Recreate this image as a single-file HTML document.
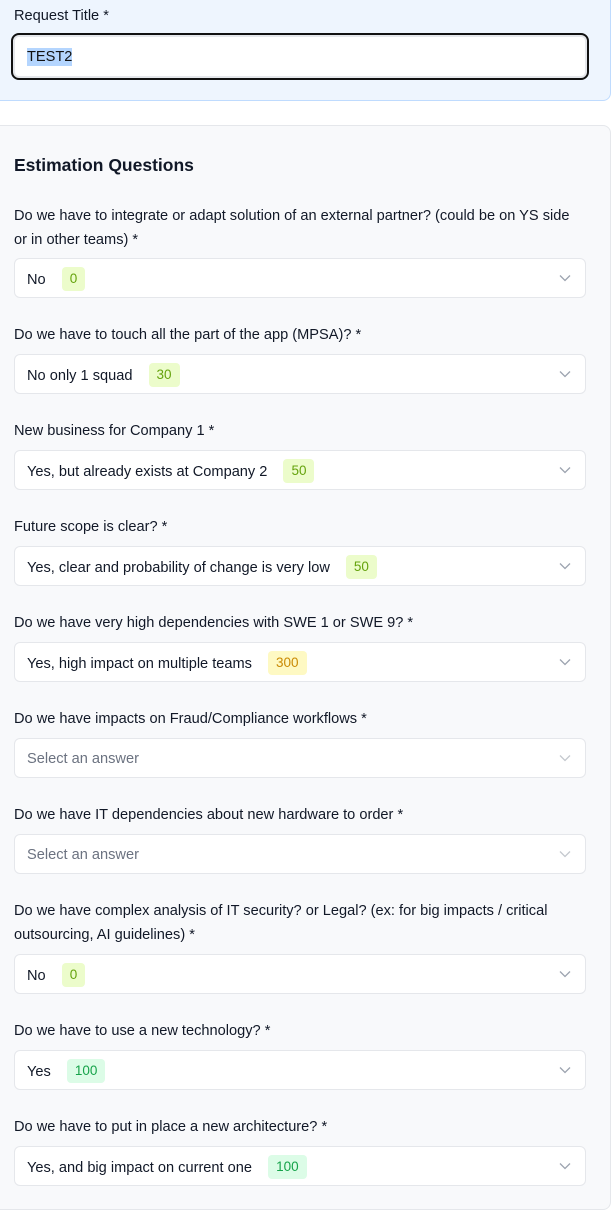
<!DOCTYPE html>
<html><head><meta charset="utf-8"><style>
*{box-sizing:border-box;margin:0;padding:0}
body{width:612px;height:1212px;background:#fff;font-family:"Liberation Sans",Arial,sans-serif;color:#111827;position:relative;overflow:hidden}
.top{position:absolute;left:-10px;top:-10px;width:621px;height:111px;background:#eef5fe;border:1px solid #bfdbfe;border-radius:8px}
.lbl{position:absolute;left:14px;font-size:14.6px;line-height:24px;color:#111827;white-space:nowrap;margin-top:1px}
.inp{position:absolute;left:11px;top:33px;width:578px;height:47px;border:2px solid #111;border-radius:8px;background:#fff;box-shadow:inset 0 0 0 2px #e5e7eb}
.inp span{position:absolute;left:14px;top:13px;font-size:14.6px;line-height:18px;background:#b4d5fe;color:#111}
.panel{position:absolute;left:-10px;top:125px;width:621px;height:1085px;background:#f8f9fb;border:1px solid #e5e7eb;border-radius:8px}
h2{position:absolute;left:14px;top:153px;font-size:17.5px;font-weight:bold;line-height:24px;color:#111827}
.sel{position:absolute;left:14px;width:572px;height:40px;background:#fff;border:1px solid #e5e7eb;border-radius:6px;font-size:14.6px}
.sel .t{position:absolute;left:12px;top:9px;line-height:18px;white-space:nowrap}
.sel .t.ph{color:#6b7280;top:11px}
.b{display:inline-block;margin-left:12px;padding:0 8px;height:24px;line-height:24px;border-radius:4px;font-size:13.5px;vertical-align:middle;position:relative;top:-1px}
.g{background:#ecfccb;color:#65a30d}.y{background:#fef9c3;color:#ca8a04}.gg{background:#dcfce7;color:#16a34a}
.sel svg{position:absolute;right:14px;top:15px}
</style></head><body>
<div class="top"></div>
<div class="lbl" style="top:3px">Request Title *</div>
<div class="inp"><span>TEST2</span></div>
<div class="panel"></div>
<h2>Estimation Questions</h2>

<div class="lbl" style="top:203px">Do we have to integrate or adapt solution of an external partner? (could be on YS side<br>or in other teams) *</div>
<div class="sel" style="top:258px"><div class="t">No <span class="b g">0</span></div><svg width="12" height="8"><path d="M1 1.5l5 5 5-5" stroke="#9ca3af" stroke-width="1.3" fill="none"/></svg></div>

<div class="lbl" style="top:322px">Do we have to touch all the part of the app (MPSA)? *</div>
<div class="sel" style="top:354px"><div class="t">No only 1 squad <span class="b g">30</span></div><svg width="12" height="8"><path d="M1 1.5l5 5 5-5" stroke="#9ca3af" stroke-width="1.3" fill="none"/></svg></div>

<div class="lbl" style="top:418px">New business for Company 1 *</div>
<div class="sel" style="top:450px"><div class="t">Yes, but already exists at Company 2 <span class="b g">50</span></div><svg width="12" height="8"><path d="M1 1.5l5 5 5-5" stroke="#9ca3af" stroke-width="1.3" fill="none"/></svg></div>

<div class="lbl" style="top:514px">Future scope is clear? *</div>
<div class="sel" style="top:546px"><div class="t">Yes, clear and probability of change is very low <span class="b g">50</span></div><svg width="12" height="8"><path d="M1 1.5l5 5 5-5" stroke="#9ca3af" stroke-width="1.3" fill="none"/></svg></div>

<div class="lbl" style="top:610px">Do we have very high dependencies with SWE 1 or SWE 9? *</div>
<div class="sel" style="top:642px"><div class="t">Yes, high impact on multiple teams <span class="b y">300</span></div><svg width="12" height="8"><path d="M1 1.5l5 5 5-5" stroke="#9ca3af" stroke-width="1.3" fill="none"/></svg></div>

<div class="lbl" style="top:706px">Do we have impacts on Fraud/Compliance workflows *</div>
<div class="sel" style="top:738px"><div class="t ph">Select an answer</div><svg width="12" height="8"><path d="M1 1.5l5 5 5-5" stroke="#c4c8ce" stroke-width="1.3" fill="none"/></svg></div>

<div class="lbl" style="top:802px">Do we have IT dependencies about new hardware to order *</div>
<div class="sel" style="top:834px"><div class="t ph">Select an answer</div><svg width="12" height="8"><path d="M1 1.5l5 5 5-5" stroke="#c4c8ce" stroke-width="1.3" fill="none"/></svg></div>

<div class="lbl" style="top:898px">Do we have complex analysis of IT security? or Legal? (ex: for big impacts / critical<br>outsourcing, AI guidelines) *</div>
<div class="sel" style="top:954px"><div class="t">No <span class="b g">0</span></div><svg width="12" height="8"><path d="M1 1.5l5 5 5-5" stroke="#9ca3af" stroke-width="1.3" fill="none"/></svg></div>

<div class="lbl" style="top:1018px">Do we have to use a new technology? *</div>
<div class="sel" style="top:1050px"><div class="t">Yes <span class="b gg">100</span></div><svg width="12" height="8"><path d="M1 1.5l5 5 5-5" stroke="#9ca3af" stroke-width="1.3" fill="none"/></svg></div>

<div class="lbl" style="top:1114px">Do we have to put in place a new architecture? *</div>
<div class="sel" style="top:1146px"><div class="t">Yes, and big impact on current one <span class="b gg">100</span></div><svg width="12" height="8"><path d="M1 1.5l5 5 5-5" stroke="#9ca3af" stroke-width="1.3" fill="none"/></svg></div>
</body></html>
